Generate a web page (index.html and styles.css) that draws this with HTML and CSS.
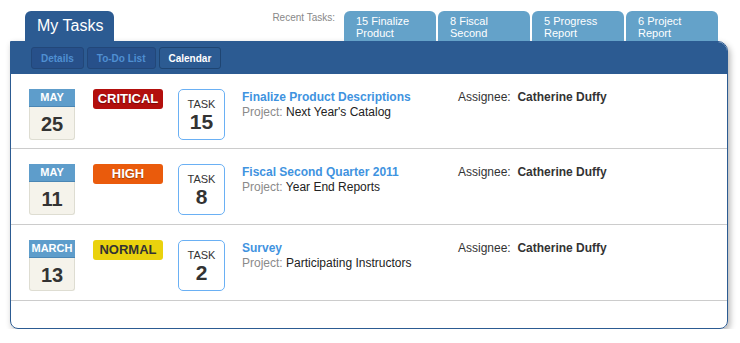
FILE: index.html
```html
<!DOCTYPE html>
<html lang="en">
<head>
  <meta charset="UTF-8">
  <meta name="viewport" content="width=device-width, initial-scale=1.0">
  <title>My Tasks</title>
  <link rel="stylesheet" href="styles.css">
</head>
<body>
  <div class="page">
    <div class="top-bar">
      <div class="main-tab">My Tasks</div>
      <div class="recent">
        <span class="recent-label">Recent Tasks:</span>
        <div class="recent-tab">15 Finalize<br>Product</div>
        <div class="recent-tab">8 Fiscal<br>Second</div>
        <div class="recent-tab">5 Progress<br>Report</div>
        <div class="recent-tab">6 Project<br>Report</div>
      </div>
    </div>

    <div class="panel">
      <div class="panel-header">
        <button class="sub-tab">Details</button>
        <button class="sub-tab">To-Do List</button>
        <button class="sub-tab active">Calendar</button>
      </div>

      <div class="task-row">
        <div class="date">
          <div class="month">MAY</div>
          <div class="day">25</div>
        </div>
        <div class="priority critical">CRITICAL</div>
        <div class="task-no">
          <span class="task-label">TASK</span>
          <span class="task-num">15</span>
        </div>
        <div class="task-info">
          <a class="task-title" href="#">Finalize Product Descriptions</a>
          <div class="project"><span class="muted">Project:</span> Next Year's Catalog</div>
        </div>
        <div class="assignee">Assignee:&nbsp; <b>Catherine Duffy</b></div>
      </div>

      <div class="task-row">
        <div class="date">
          <div class="month">MAY</div>
          <div class="day">11</div>
        </div>
        <div class="priority high">HIGH</div>
        <div class="task-no">
          <span class="task-label">TASK</span>
          <span class="task-num">8</span>
        </div>
        <div class="task-info">
          <a class="task-title" href="#">Fiscal Second Quarter 2011</a>
          <div class="project"><span class="muted">Project:</span> Year End Reports</div>
        </div>
        <div class="assignee">Assignee:&nbsp; <b>Catherine Duffy</b></div>
      </div>

      <div class="task-row">
        <div class="date">
          <div class="month">MARCH</div>
          <div class="day">13</div>
        </div>
        <div class="priority normal">NORMAL</div>
        <div class="task-no">
          <span class="task-label">TASK</span>
          <span class="task-num">2</span>
        </div>
        <div class="task-info">
          <a class="task-title" href="#">Survey</a>
          <div class="project"><span class="muted">Project:</span> Participating Instructors</div>
        </div>
        <div class="assignee">Assignee:&nbsp; <b>Catherine Duffy</b></div>
      </div>

      <div class="panel-foot"></div>
    </div>
  </div>
</body>
</html>
```

FILE: styles.css
```css
body {
  font-family: "Liberation Sans", Arial, sans-serif;
  background: #ffffff;
  margin: 0;
  padding: 0;
  color: #222;
}

.page {
  padding: 11px 0 0 10px;
  width: 718px;
}

.top-bar {
  display: flex;
  align-items: flex-end;
  justify-content: space-between;
  height: 30px;
}

.main-tab {
  margin-left: 15px;
  width: 89px;
  height: 30px;
  box-sizing: border-box;
  padding: 6px 0 0 12px;
  background: #2c5b92;
  color: #fff;
  font-size: 16px;
  border-radius: 6px 6px 0 0;
}

.recent {
  display: flex;
  align-items: flex-start;
  height: 30px;
  padding-right: 10px;
}

.recent-label {
  font-size: 10px;
  color: #888;
  margin-right: 7px;
  padding-top: 1px;
}

.recent-tab {
  width: 92px;
  height: 30px;
  box-sizing: border-box;
  margin-left: 2px;
  padding: 4px 0 0 12px;
  background: #64a2c9;
  color: #fff;
  font-size: 11px;
  line-height: 12px;
  border-radius: 6px 6px 0 0;
}

.panel {
  border: 1px solid #2c5b92;
  border-radius: 0 10px 8px 8px;
  overflow: hidden;
  box-shadow: 2px 3px 6px rgba(0, 0, 0, 0.3);
}

.panel-header {
  display: flex;
  gap: 3px;
  height: 32px;
  box-sizing: border-box;
  padding: 5px 0 0 20px;
  background: #2c5b92;
}

.sub-tab {
  height: 22px;
  padding: 0 9px;
  font-family: inherit;
  font-size: 10px;
  font-weight: bold;
  color: #4f8fd2;
  background: #27508a;
  border: 1px solid #224779;
  border-radius: 3px;
}

.sub-tab.active {
  color: #fff;
  background: #2c5b92;
  border-color: #1f4572;
}

.task-row {
  display: flex;
  align-items: flex-start;
  height: 75px;
  box-sizing: border-box;
  padding: 15px 0 0 18px;
  border-bottom: 1px solid #cccccc;
}

.task-row + .task-row {
  height: 76px;
}

.date {
  width: 46px;
  margin-right: 18px;
}

.month {
  height: 17px;
  line-height: 17px;
  background: #5e9dcb;
  border-bottom: 1px solid #4a86b4;
  color: #fff;
  font-size: 11px;
  font-weight: bold;
  text-align: center;
}

.day {
  height: 33px;
  box-sizing: border-box;
  padding-top: 6px;
  background: #f5f3eb;
  border: 1px solid #deddd2;
  border-top: none;
  border-radius: 0 0 3px 3px;
  color: #333;
  font-size: 20px;
  font-weight: bold;
  text-align: center;
}

.priority {
  width: 70px;
  height: 20px;
  line-height: 20px;
  margin-right: 15px;
  border-radius: 3px;
  color: #fff;
  font-size: 13px;
  font-weight: bold;
  text-align: center;
  text-shadow: 0 1px 1px rgba(0, 0, 0, 0.35);
}

.critical {
  background: #b30f0d;
}

.high {
  background: #ea5b0c;
}

.normal {
  background: #ead20d;
  color: #333;
  text-shadow: none;
}

.task-no {
  width: 47px;
  height: 51px;
  box-sizing: border-box;
  margin-right: 17px;
  padding-top: 8px;
  display: flex;
  flex-direction: column;
  align-items: center;
  border: 1px solid #6ab0f4;
  border-radius: 5px;
  color: #333;
}

.task-label {
  font-size: 11px;
  line-height: 12px;
}

.task-num {
  font-size: 21px;
  font-weight: bold;
  line-height: 24px;
}

.task-info {
  width: 216px;
  padding-top: 1px;
  font-size: 12px;
  line-height: 15px;
}

.task-title {
  display: block;
  color: #3f93e0;
  font-weight: bold;
  text-decoration: none;
}

.muted {
  color: #8a8a8a;
}

.assignee {
  padding-top: 1px;
  font-size: 12px;
  line-height: 15px;
  color: #333;
}

.panel-foot {
  height: 27px;
}
```
